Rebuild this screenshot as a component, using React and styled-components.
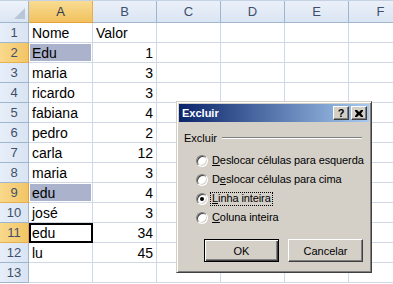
import * as React from "react";
import styled, { createGlobalStyle } from "styled-components";

const GlobalStyle = createGlobalStyle`
  html, body {
    margin: 0;
    padding: 0;
    background: #fff;
    overflow: hidden;
  }
`;

const Page = styled.div`
  position: relative;
  width: 393px;
  height: 284px;
  overflow: hidden;
  font-family: "Liberation Sans", Arial, sans-serif;
`;

/* Sheet grid */
const Sheet = styled.div`
  display: grid;
  grid-template-columns: 29px repeat(6, 64px);
  grid-template-rows: 22px repeat(13, 20px);
  border-top: 1px solid #c5d2e3;
`;

const Corner = styled.div`
  box-sizing: border-box;
  position: relative;
  background: linear-gradient(#eef3fa, #dbe5f3);
  border-right: 1px solid #9eb6ce;
  border-bottom: 1px solid #9eb6ce;
  &::after {
    content: "";
    position: absolute;
    right: 3px;
    bottom: 3px;
    width: 0;
    height: 0;
    border-left: 11px solid transparent;
    border-bottom: 11px solid #b8c6d8;
  }
`;

const ColHead = styled.div`
  box-sizing: border-box;
  display: flex;
  align-items: center;
  justify-content: center;
  font-size: 13px;
  color: ${(p) => (p.selected ? "#2e3a4c" : "#3f4f6a")};
  background: ${(p) =>
    p.selected
      ? "linear-gradient(#f9dc92, #f1c15e)"
      : "linear-gradient(#eaf0f9, #dbe5f3)"};
  border-right: 1px solid ${(p) => (p.selected ? "#e8b04c" : "#9eb6ce")};
  border-bottom: 1px solid ${(p) => (p.selected ? "#e8a13a" : "#9eb6ce")};
`;

const RowHead = styled.div`
  box-sizing: border-box;
  display: flex;
  align-items: center;
  justify-content: center;
  font-size: 13px;
  color: #3f4f6a;
  background: ${(p) =>
    p.selected
      ? "linear-gradient(to right, #f9d98c, #f2c566)"
      : "linear-gradient(to right, #e6eef9, #dae4f2)"};
  border-right: 1px solid ${(p) => (p.selected ? "#e8a13a" : "#9eb6ce")};
  border-bottom: 1px solid ${(p) => (p.selected ? "#e8b04c" : "#9eb6ce")};
`;

const Cell = styled.div`
  box-sizing: border-box;
  display: flex;
  align-items: center;
  justify-content: ${(p) => (p.num ? "flex-end" : "flex-start")};
  padding: 1px 3px 0 3px;
  font-size: 14px;
  color: #000;
  white-space: nowrap;
  border-right: 1px solid #d0d7e5;
  border-bottom: 1px solid #d0d7e5;
  background: ${(p) => (p.picked ? "#aab3cb" : "#fff")};
  ${(p) => (p.picked ? "box-shadow: inset 0 0 0 1px #fff;" : "")}
  ${(p) => (p.active ? "outline: 2px solid #000; outline-offset: -2px;" : "")}
`;

/* Dialog */
const Dialog = styled.div`
  position: absolute;
  left: 176px;
  top: 101px;
  width: 196px;
  height: 172px;
  box-sizing: border-box;
  background: #d4d0c8;
  border: 1px solid;
  border-color: #d4d0c8 #404040 #404040 #d4d0c8;
  box-shadow: inset 1px 1px #fff, inset -1px -1px #808080;
  padding: 2px;
  display: flex;
  flex-direction: column;
  font-family: "Liberation Sans", Tahoma, sans-serif;
  font-size: 11px;
  color: #000;
`;

const TitleBar = styled.div`
  height: 18px;
  display: flex;
  align-items: center;
  justify-content: space-between;
  padding: 0 2px 0 3px;
  background: linear-gradient(to right, #0a246a, #a6caf0);
`;

const Title = styled.span`
  color: #fff;
  font-weight: bold;
  font-size: 11px;
`;

const CaptionButtons = styled.div`
  display: flex;
  gap: 2px;
`;

const CapBtn = styled.div`
  box-sizing: border-box;
  width: 16px;
  height: 14px;
  display: flex;
  align-items: center;
  justify-content: center;
  background: #d4d0c8;
  border: 1px solid;
  border-color: #fff #404040 #404040 #fff;
  box-shadow: inset -1px -1px #808080;
  font-weight: bold;
  font-size: 11px;
`;

const Body = styled.div`
  flex: 1;
  display: flex;
  flex-direction: column;
  padding: 9px 6px 0 5px;
`;

const GroupLabel = styled.div`
  display: flex;
  align-items: center;
  gap: 5px;
  height: 14px;
  &::after {
    content: "";
    flex: 1;
    height: 0;
    border-top: 1px solid #808080;
    border-bottom: 1px solid #fff;
    margin-right: 1px;
  }
`;

const Options = styled.div`
  display: flex;
  flex-direction: column;
  padding: 6px 0 0 12px;
`;

const Option = styled.div`
  display: flex;
  align-items: center;
  gap: 2px;
  height: 19px;
  white-space: nowrap;
`;

const Radio = styled.span`
  box-sizing: border-box;
  position: relative;
  flex: 0 0 12px;
  width: 12px;
  height: 12px;
  border-radius: 50%;
  background: #fff;
  border: 1px solid;
  border-color: #808080 #fff #fff #808080;
  box-shadow: inset 1px 1px #404040, inset -1px -1px #d4d0c8;
  &::after {
    content: "";
    display: ${(p) => (p.checked ? "block" : "none")};
    position: absolute;
    left: 3px;
    top: 3px;
    width: 4px;
    height: 4px;
    border-radius: 50%;
    background: #000;
  }
`;

const OptionText = styled.span`
  padding: 0 1px 1px 1px;
  border: 1px dotted ${(p) => (p.focused ? "#000" : "transparent")};
  line-height: 11px;
  letter-spacing: -0.1px;
`;

const Buttons = styled.div`
  display: flex;
  justify-content: flex-end;
  gap: 9px;
  margin-top: auto;
  margin-bottom: 8px;
`;

const Button = styled.div`
  box-sizing: border-box;
  width: 75px;
  height: 23px;
  display: flex;
  align-items: center;
  justify-content: center;
  background: #d4d0c8;
  border: 1px solid;
  border-color: ${(p) => (p.primary ? "#000" : "#fff #404040 #404040 #fff")};
  box-shadow: ${(p) =>
    p.primary
      ? "inset 1px 1px #fff, inset -1px -1px #404040, inset -2px -2px #808080"
      : "inset -1px -1px #808080"};
`;

const U = styled.span`
  text-decoration: underline;
`;

const columns = ["A", "B", "C", "D", "E", "F"];

const rows = [
  ["Nome", "Valor"],
  ["Edu", 1],
  ["maria", 3],
  ["ricardo", 3],
  ["fabiana", 4],
  ["pedro", 2],
  ["carla", 12],
  ["maria", 3],
  ["edu", 4],
  ["josé", 3],
  ["edu", 34],
  ["lu", 45],
  ["", ""],
];

const selectedRows = [2, 9, 11];

const CloseIcon = () => (
  <svg width="8" height="7" viewBox="0 0 8 7">
    <path d="M0 0h2l2 2 2-2h2v1L6 3.5 8 6v1H6L4 5 2 7H0V6l2-2.5L0 1z" fill="#000" />
  </svg>
);

export default function App() {
  return (
    <Page>
      <GlobalStyle />
      <Sheet>
        <Corner />
        {columns.map((c) => (
          <ColHead key={c} selected={c === "A"}>
            {c}
          </ColHead>
        ))}
        {rows.map((r, i) => {
          const n = i + 1;
          return (
            <React.Fragment key={n}>
              <RowHead selected={selectedRows.includes(n)}>{n}</RowHead>
              <Cell picked={n === 2 || n === 9} active={n === 11}>
                {r[0]}
              </Cell>
              <Cell num={typeof r[1] === "number"}>{r[1]}</Cell>
              <Cell />
              <Cell />
              <Cell />
              <Cell />
            </React.Fragment>
          );
        })}
      </Sheet>

      <Dialog>
        <TitleBar>
          <Title>Excluir</Title>
          <CaptionButtons>
            <CapBtn>?</CapBtn>
            <CapBtn>
              <CloseIcon />
            </CapBtn>
          </CaptionButtons>
        </TitleBar>
        <Body>
          <GroupLabel>Excluir</GroupLabel>
          <Options>
            <Option>
              <Radio />
              <OptionText>
                <U>D</U>eslocar células para esquerda
              </OptionText>
            </Option>
            <Option>
              <Radio />
              <OptionText>
                D<U>e</U>slocar células para cima
              </OptionText>
            </Option>
            <Option>
              <Radio checked />
              <OptionText focused>
                <U>L</U>inha inteira
              </OptionText>
            </Option>
            <Option>
              <Radio />
              <OptionText>
                <U>C</U>oluna inteira
              </OptionText>
            </Option>
          </Options>
          <Buttons>
            <Button primary>OK</Button>
            <Button>Cancelar</Button>
          </Buttons>
        </Body>
      </Dialog>
    </Page>
  );
}
